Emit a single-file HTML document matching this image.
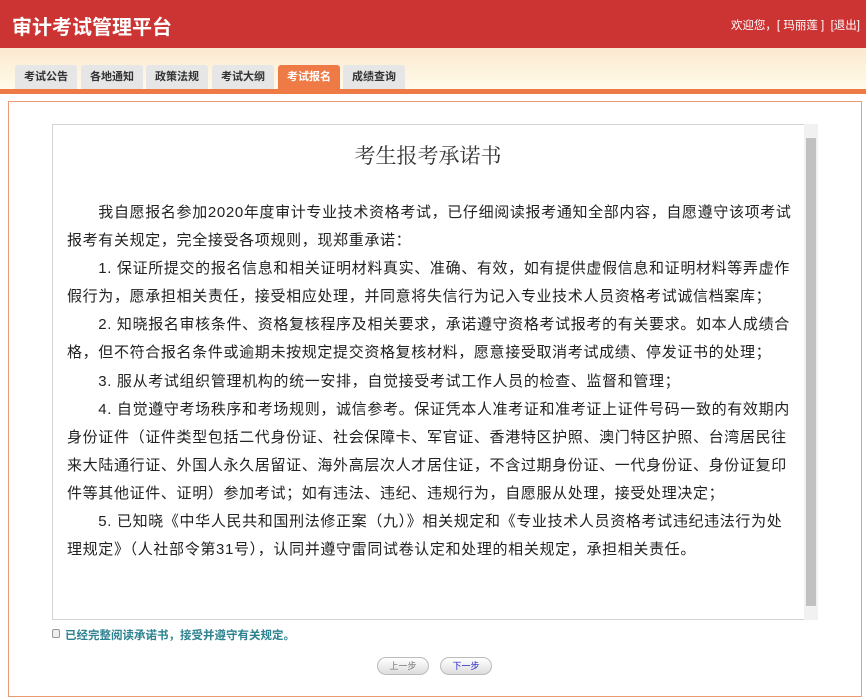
<!DOCTYPE html>
<html><head><meta charset="utf-8"><style>
*{margin:0;padding:0;box-sizing:border-box}
body{width:866px;height:700px;overflow:hidden;background:#fff;font-family:"Liberation Sans","Noto Sans CJK SC",sans-serif;position:relative}
.hd{position:absolute;left:0;top:0;width:866px;height:48px;background:#cc3333}
.logo{position:absolute;left:12px;top:11px;color:#fff;font-size:20px;font-weight:bold}
.wel{position:absolute;right:6px;top:17px;color:#fff;font-size:11.5px}
.band{position:absolute;left:0;top:48px;width:866px;height:41px;background:linear-gradient(#fbe9cf,#fffbea)}
.tab{position:absolute;top:65px;width:62px;height:24px;background:#e6e6e6;border-radius:3px 3px 0 0;font-size:11px;font-weight:bold;color:#333;text-align:center;line-height:24px}
.tab.on{background:#ee7b45;color:#fff}
.bar{position:absolute;left:0;top:89px;width:866px;height:5px;background:#ee7b45}
.box{position:absolute;left:8px;top:101px;width:854px;height:596px;border:1px solid #eb9a74}
.ta{position:absolute;left:52px;top:124px;width:766px;height:496px;border:1px solid #d4d4d4;border-right:none}
.sb{position:absolute;left:804px;top:124px;width:14px;height:496px;background:#f1f1f1}
.thumb{position:absolute;left:806px;top:138px;width:10px;height:468px;background:#c1c1c1}
.title{position:absolute;left:52px;width:752px;top:140px;text-align:center;font-family:"Liberation Serif","Noto Serif CJK SC",serif;font-size:21px;color:#333}
.txt{position:absolute;left:67px;top:199px;font-size:15px;line-height:28.1px;color:#222;white-space:nowrap;letter-spacing:0.65px}
.chk{position:absolute;left:52px;top:629px;width:8px;height:9px;border:1px solid #999;border-radius:2px;background:#eee}
.agree{position:absolute;left:65px;top:627px;font-size:11.5px;font-weight:bold;color:#2d8290}
.btn{position:absolute;top:657px;width:52px;height:18px;border:1px solid #bbb;border-radius:9px;background:linear-gradient(#fff,#ddd);font-size:9px;text-align:center;line-height:16px}
</style></head><body>
<div class="hd"><div class="logo">审计考试管理平台</div><div class="wel">欢迎您，[ 玛丽莲 ]&nbsp; [退出]</div></div>
<div class="band"></div>
<div class="tab" style="left:15px">考试公告</div>
<div class="tab" style="left:81px">各地通知</div>
<div class="tab" style="left:146px">政策法规</div>
<div class="tab" style="left:212px">考试大纲</div>
<div class="tab on" style="left:278px">考试报名</div>
<div class="tab" style="left:343px">成绩查询</div>
<div class="bar"></div>
<div class="box"></div>
<div class="ta"></div>
<div class="sb"></div><div class="thumb"></div>
<div class="title">考生报考承诺书</div>
<div class="txt">　　我自愿报名参加2020年度审计专业技术资格考试，已仔细阅读报考通知全部内容，自愿遵守该项考试<br>报考有关规定，完全接受各项规则，现郑重承诺：<br>　　1. 保证所提交的报名信息和相关证明材料真实、准确、有效，如有提供虚假信息和证明材料等弄虚作<br>假行为，愿承担相关责任，接受相应处理，并同意将失信行为记入专业技术人员资格考试诚信档案库；<br>　　2. 知晓报名审核条件、资格复核程序及相关要求，承诺遵守资格考试报考的有关要求。如本人成绩合<br>格，但不符合报名条件或逾期未按规定提交资格复核材料，愿意接受取消考试成绩、停发证书的处理；<br>　　3. 服从考试组织管理机构的统一安排，自觉接受考试工作人员的检查、监督和管理；<br>　　4. 自觉遵守考场秩序和考场规则，诚信参考。保证凭本人准考证和准考证上证件号码一致的有效期内<br>身份证件（证件类型包括二代身份证、社会保障卡、军官证、香港特区护照、澳门特区护照、台湾居民往<br>来大陆通行证、外国人永久居留证、海外高层次人才居住证，不含过期身份证、一代身份证、身份证复印<br>件等其他证件、证明）参加考试；如有违法、违纪、违规行为，自愿服从处理，接受处理决定；<br>　　5. 已知晓《中华人民共和国刑法修正案（九）》相关规定和《专业技术人员资格考试违纪违法行为处<br>理规定》（人社部令第31号），认同并遵守雷同试卷认定和处理的相关规定，承担相关责任。</div>
<div class="chk"></div>
<div class="agree">已经完整阅读承诺书，接受并遵守有关规定。</div>
<div class="btn" style="left:377px;color:#777">上一步</div>
<div class="btn" style="left:440px;color:#22c">下一步</div>
</body></html>
